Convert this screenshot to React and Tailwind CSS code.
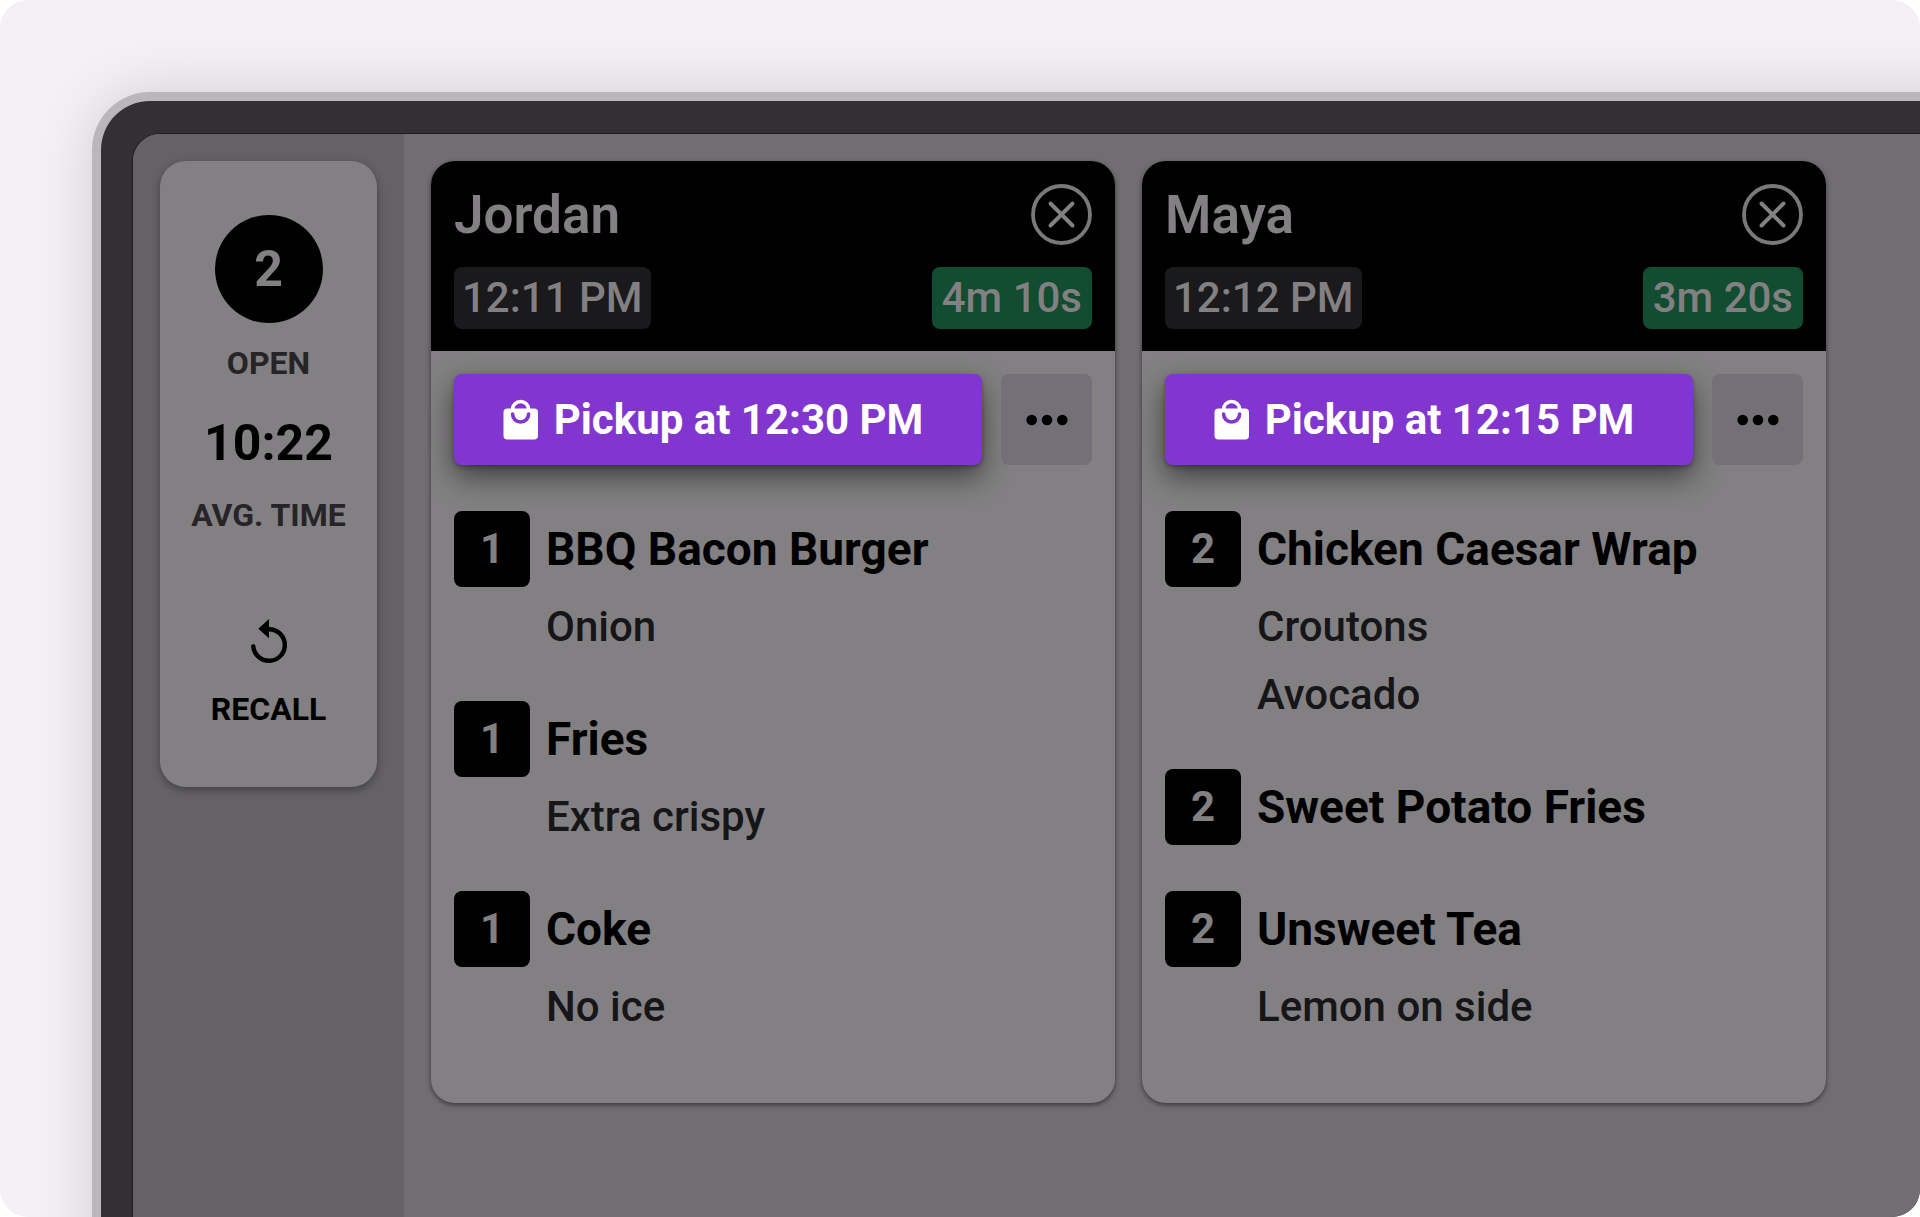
import React, { useState } from "react";

const initialOrders = [
  {
    id: 1,
    name: "Jordan",
    placedAt: "12:11 PM",
    elapsed: "4m 10s",
    pickup: "12:30 PM",
    items: [
      { qty: 1, name: "BBQ Bacon Burger", mods: ["Onion"] },
      { qty: 1, name: "Fries", mods: ["Extra crispy"] },
      { qty: 1, name: "Coke", mods: ["No ice"] },
    ],
  },
  {
    id: 2,
    name: "Maya",
    placedAt: "12:12 PM",
    elapsed: "3m 20s",
    pickup: "12:15 PM",
    items: [
      { qty: 2, name: "Chicken Caesar Wrap", mods: ["Croutons", "Avocado"] },
      { qty: 2, name: "Sweet Potato Fries", mods: [] },
      { qty: 2, name: "Unsweet Tea", mods: ["Lemon on side"] },
    ],
  },
];

const BagIcon = () => (
  <svg width="35" height="42" viewBox="0 0 35 42" fill="none" aria-hidden="true">
    <rect x="0.5" y="9.5" width="34.5" height="31" rx="4" fill="#fff" />
    <path d="M9.6 10.5a8 8 0 0 1 16 0" stroke="#fff" strokeWidth="3.6" />
    <path d="M9.6 15a8 8 0 0 0 16 0" stroke="#8236d0" strokeWidth="3.6" strokeLinecap="round" />
  </svg>
);

const RecallIcon = () => (
  <svg width="36" height="44" viewBox="0 0 36 44" fill="none" aria-hidden="true">
    <path
      d="M2.3 27.5A15.8 15.8 0 1 0 18 10.2H15"
      stroke="#000"
      strokeWidth="4.4"
      strokeLinecap="round"
    />
    <path d="M18 0v19.3L7.3 9.7z" fill="#000" />
  </svg>
);

const CloseIcon = () => (
  <svg width="61" height="61" viewBox="0 0 61 61" fill="none" aria-hidden="true">
    <circle cx="30.5" cy="30.5" r="28.5" stroke="#7a787a" strokeWidth="3.8" />
    <path
      d="M19.5 19.5l22 22M41.5 19.5l-22 22"
      stroke="#828082"
      strokeWidth="3.9"
      strokeLinecap="round"
    />
  </svg>
);

const DotsIcon = () => (
  <svg width="42" height="12" viewBox="0 0 42 12" aria-hidden="true">
    <circle cx="5.7" cy="6" r="5.3" />
    <circle cx="21" cy="6" r="5.3" />
    <circle cx="36.3" cy="6" r="5.3" />
  </svg>
);

const Sidebar = ({ open, avgTime }) => (
  <aside className="w-[271px] shrink-0 bg-[#646265] p-[27px]">
    <div className="flex flex-col items-center rounded-[26px] bg-[#828082] pt-[54px] pb-[58px] shadow-[0_3px_9px_rgba(0,0,0,0.35)]">
      <div className="flex size-[108px] items-center justify-center rounded-full bg-black text-[50px] font-bold text-[#828082]">
        {open}
      </div>
      <p className="mt-5 text-[32px] leading-10 font-bold text-[#262427]">OPEN</p>
      <p className="mt-8 text-[50px] leading-14 font-bold">{avgTime}</p>
      <p className="mt-6 text-[32px] leading-10 font-bold text-[#262427]">AVG. TIME</p>
      <button className="mt-[84px] flex flex-col items-center gap-[26px] text-[32px] leading-10 font-bold">
        <RecallIcon />
        RECALL
      </button>
    </div>
  </aside>
);

const OrderItem = ({ item }) => (
  <li>
    <div className="flex items-center gap-4">
      <span className="flex size-[76px] items-center justify-center rounded-lg bg-black text-[42px] leading-14 font-bold text-[#828082]">
        {item.qty}
      </span>
      <h3 className="text-[46px] leading-14 font-bold">{item.name}</h3>
    </div>
    {item.mods.map((mod) => (
      <p key={mod} className="pt-3 pl-[92px] text-[42px] leading-14 font-medium text-[#161517]">
        {mod}
      </p>
    ))}
  </li>
);

const OrderCard = ({ order, onClose }) => (
  <article className="w-[684px] overflow-hidden rounded-3xl bg-[#828082] shadow-[0_2px_5px_rgba(0,0,0,0.5)]">
    <header className="flex flex-col gap-[22px] bg-black p-[23px] pb-[22px] text-[#828082]">
      <div className="flex items-center justify-between">
        <h2 className="text-[53px] leading-14 font-semibold">{order.name}</h2>
        <button aria-label={`Close ${order.name}`} onClick={() => onClose(order.id)}>
          <CloseIcon />
        </button>
      </div>
      <div className="flex items-center justify-between text-[42px] leading-[62px] font-medium">
        <time className="rounded-lg bg-[#1a191b] px-2">{order.placedAt}</time>
        <span className="rounded-lg bg-[#124d31] px-[10px]">{order.elapsed}</span>
      </div>
    </header>

    <div className="px-[23px] pt-[23px] pb-[68px]">
      <div className="flex gap-[19px]">
        <button className="flex h-[91px] flex-1 items-center justify-center gap-4 rounded-lg bg-[#8236d0] pr-[10px] text-[42px] font-bold text-white shadow-[0_2px_4px_rgba(0,0,0,0.3),0_12px_28px_rgba(0,0,0,0.5)]">
          <BagIcon />
          Pickup at {order.pickup}
        </button>
        <button
          aria-label="More options"
          className="flex size-[91px] items-center justify-center rounded-lg bg-[#737077]"
        >
          <DotsIcon />
        </button>
      </div>

      <ul className="mt-[46px] space-y-[46px]">
        {order.items.map((item) => (
          <OrderItem key={item.name} item={item} />
        ))}
      </ul>
    </div>
  </article>
);

const App = () => {
  const [orders, setOrders] = useState(initialOrders);

  const closeOrder = (id) => setOrders(orders.filter((o) => o.id !== id));

  return (
    <div className="flex min-h-screen flex-col overflow-hidden rounded-[28px] bg-[#f3f1f4] pt-[92px] pl-[92px] font-[Roboto,sans-serif] text-black">
      {/* Device frame, runs off the right and bottom edges */}
      <div className="-mr-24 -mb-24 flex flex-1 rounded-tl-[58px] border-t-[9px] border-l-[9px] border-[#b9b7ba] bg-[#323033] pt-8 pl-[31px] shadow-[0_0_60px_rgba(0,0,0,0.14)]">
        <div className="flex flex-1 overflow-hidden rounded-tl-[28px] border-t border-l border-[#1d1c1e] bg-[#706e71]">
          <Sidebar open={orders.length} avgTime="10:22" />
          <main className="flex flex-1 items-start gap-[27px] p-[27px]">
            {orders.map((order) => (
              <OrderCard key={order.id} order={order} onClose={closeOrder} />
            ))}
          </main>
        </div>
      </div>
    </div>
  );
};

export default App;
